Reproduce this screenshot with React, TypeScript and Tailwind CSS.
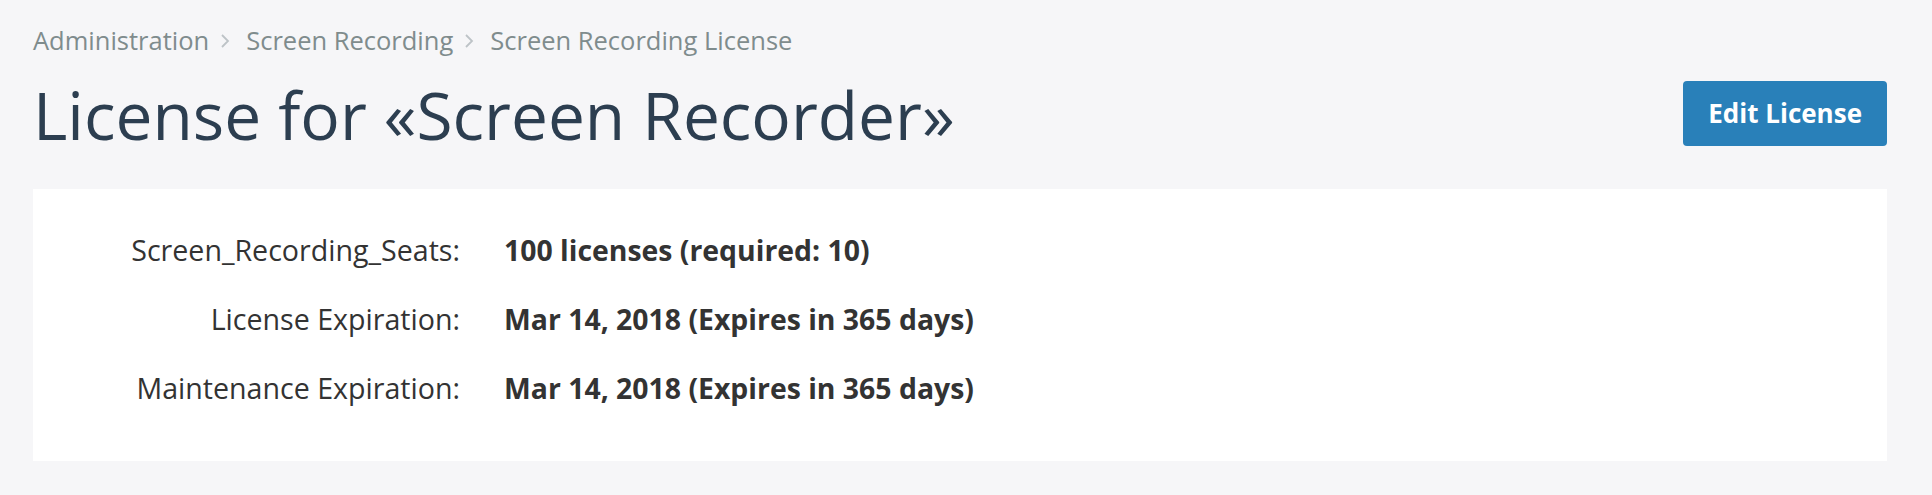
import React from 'react';

type Fila = {
  etiqueta: string;
  valor: string;
};

const filas: Fila[] = [
  { etiqueta: 'Screen_Recording_Seats:', valor: '100 licenses (required: 10)' },
  { etiqueta: 'License Expiration:', valor: 'Mar 14, 2018 (Expires in 365 days)' },
  { etiqueta: 'Maintenance Expiration:', valor: 'Mar 14, 2018 (Expires in 365 days)' },
];

const migas = ['Administration', 'Screen Recording', 'Screen Recording License'];

function Chevron() {
  return (
    <svg width="12" height="16" viewBox="0 0 12 16" className="shrink-0">
      <polyline points="3,2 9,8 3,14" fill="none" stroke="#bdc3c7" strokeWidth="1.8" />
    </svg>
  );
}

export default function App() {
  return (
    <div className="min-h-[495px] bg-[#f6f6f8] pl-[33px] pr-[45px] pt-[22px] pb-[34px] font-['Open_Sans',sans-serif]">
      {/* Breadcrumb */}
      <nav className="flex items-center text-[25.5px] leading-[37px] text-[#7f8c8d]">
        {migas.map((miga, i) => (
          <React.Fragment key={miga}>
            {i > 0 && (
              <span className="ml-[10px] mr-[15px] flex items-center">
                <Chevron />
              </span>
            )}
            <span>{miga}</span>
          </React.Fragment>
        ))}
      </nav>

      {/* Title + action */}
      <div className="mt-[17px] flex items-start justify-between">
        <h1 className="text-[65.8px] leading-[78px] font-normal text-[#2c3e50]">License for «Screen Recorder»</h1>
        <button className="mt-[5px] h-[65px] rounded-[4px] bg-[#2980b9] px-[25px] text-[26px] font-bold text-white">
          Edit License
        </button>
      </div>

      {/* Details card */}
      <div className="mt-[35px] bg-white pt-[40px] pb-[52px]">
        <div className="flex flex-col gap-[27px]">
          {filas.map((fila) => (
            <div key={fila.etiqueta} className="flex text-[28.6px] leading-[42px] text-[#333333]">
              <span className="w-[427px] shrink-0 text-right">{fila.etiqueta}</span>
              <span className="ml-[44px] text-[28.4px] font-bold">{fila.valor}</span>
            </div>
          ))}
        </div>
      </div>
    </div>
  );
}
